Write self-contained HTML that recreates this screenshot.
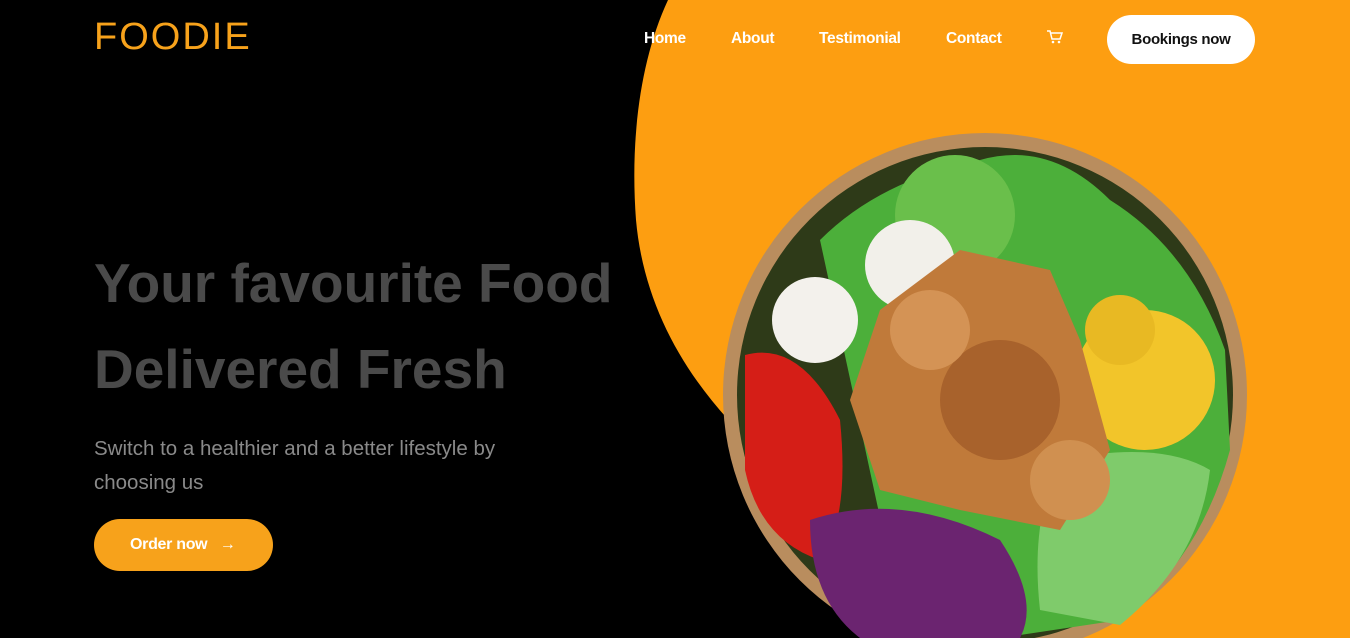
<!DOCTYPE html>
<html><head><meta charset="utf-8"><style>
*{margin:0;padding:0;box-sizing:border-box}
body{width:1350px;height:638px;overflow:hidden;background:#000;font-family:"Liberation Sans",sans-serif;position:relative}
svg.bg{position:absolute;left:0;top:0}
.logo{position:absolute;left:94px;top:16px;color:#f7a21b;font-size:38px;letter-spacing:2px;font-weight:400}
.nav a{position:absolute;top:30px;color:#fff;font-size:15.5px;font-weight:bold;text-decoration:none;letter-spacing:-0.3px}
.book{position:absolute;left:1107px;top:15px;width:148px;height:49px;background:#fff;border-radius:25px;color:#111;font-size:15px;font-weight:bold;text-align:center;line-height:49px;letter-spacing:-0.3px}
h1{position:absolute;left:94px;top:240px;color:#4a4a4a;font-size:55px;line-height:86px;font-weight:bold}
p{position:absolute;left:94px;top:432px;color:#8a8a8a;font-size:20.5px;line-height:34px;width:440px}
.order{position:absolute;left:94px;top:519px;width:179px;height:52px;background:#f7a21b;border-radius:26px;color:#fff;font-size:16px;font-weight:bold;line-height:52px;padding-left:36px;letter-spacing:-0.3px}
</style></head><body>
<svg class="bg" width="1350" height="638">
<path d="M668,0 C640,60 630,140 636,220 C645,320 700,400 770,460 L900,638 L1350,638 L1350,0 Z" fill="#fd9e11"/>
<circle cx="985" cy="395" r="262" fill="#b98d5e"/>
<circle cx="985" cy="395" r="248" fill="#2e3a18"/>
<path d="M820,240 Q880,180 980,160 Q1050,140 1110,200 Q1190,250 1225,350 L1230,450 Q1200,560 1120,620 L1000,638 L900,610 Z" fill="#4caf3a"/>
<circle cx="955" cy="215" r="60" fill="#6abf4b"/>
<circle cx="1145" cy="380" r="70" fill="#f2c52a"/>
<circle cx="1120" cy="330" r="35" fill="#e8b923"/>
<circle cx="910" cy="265" r="45" fill="#f2f0ea"/>
<circle cx="815" cy="320" r="43" fill="#f3f1ec"/>
<path d="M745,355 Q800,340 840,420 Q850,520 820,560 Q760,540 745,470 Z" fill="#d51e17"/>
<path d="M810,520 Q900,490 1000,540 Q1040,600 1020,638 L860,638 Q810,600 810,520 Z" fill="#6b2470"/>
<path d="M1060,460 Q1160,440 1210,470 Q1200,560 1120,625 L1040,610 Q1030,520 1060,460 Z" fill="#7fcb6b"/>
<path d="M880,310 L960,250 L1050,270 L1080,340 L1110,450 L1060,530 L960,510 L880,490 L850,400 Z" fill="#c07a3a"/>
<circle cx="1000" cy="400" r="60" fill="#a8622c"/>
<circle cx="930" cy="330" r="40" fill="#d49355"/>
<circle cx="1070" cy="480" r="40" fill="#d09050"/>
</svg>
<div class="logo">FOODIE</div>
<div class="nav"><a style="left:644px">Home</a><a style="left:731px">About</a><a style="left:819px">Testimonial</a><a style="left:946px">Contact</a>
<svg style="position:absolute;left:1046px;top:29px" width="18" height="16" viewBox="0 0 18 16"><path d="M1 2h3l2 8h8l2-6H5" fill="none" stroke="#fff" stroke-width="1.5"/><circle cx="7" cy="13" r="1.3" fill="#fff"/><circle cx="13" cy="13" r="1.3" fill="#fff"/></svg></div>
<div class="book">Bookings now</div>
<h1>Your favourite Food<br>Delivered Fresh</h1>
<p>Switch to a healthier and a better lifestyle by choosing us</p>
<div class="order">Order now &nbsp;&nbsp;→</div>
</body></html>
